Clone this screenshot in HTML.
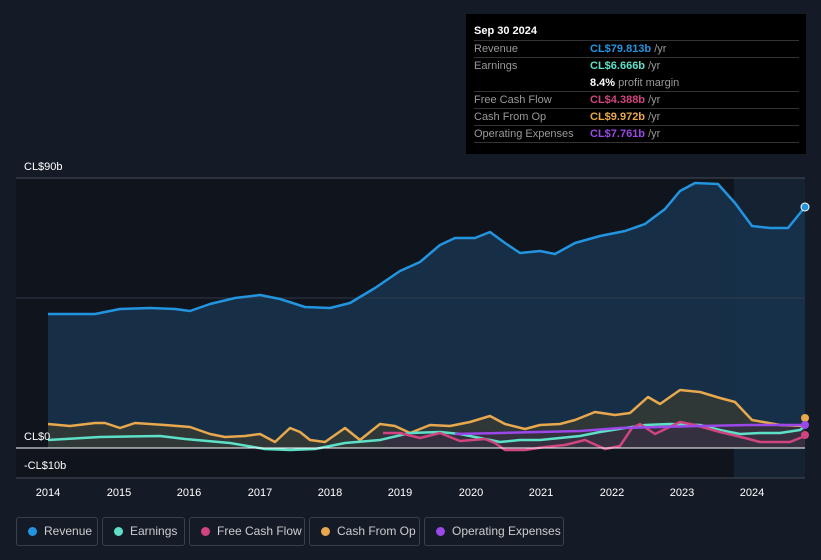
<!DOCTYPE html>
<html><head><meta charset="utf-8"><style>
*{margin:0;padding:0;box-sizing:border-box}
body{width:821px;height:560px;background:#151b26;font-family:"Liberation Sans",sans-serif;position:relative;overflow:hidden}
.tt{position:absolute;left:466px;top:14px;width:340px;height:140px;background:#000;padding:8px 7px 0 8px;font-size:11px}
.tt .h{color:#fff;font-weight:bold;font-size:11px;height:19px;line-height:18px;border-bottom:1px solid #333}
.tt .r{display:flex;height:17px;line-height:16px;border-bottom:1px solid #333;color:#999}
.tt .r.nb{border-bottom:none}
.tt .l{width:116px}
.tt b{font-weight:bold}
.lab{position:absolute;color:#fff;font-size:11px}
.leg{position:absolute;top:517px;height:29px;border:1px solid #3a404b;border-radius:3px;color:#ccc;font-size:12px;line-height:27px;padding-left:27px}
.leg i{position:absolute;left:11px;top:9px;width:9px;height:9px;border-radius:50%}
</style></head><body>
<svg width="821" height="560" style="position:absolute;left:0;top:0">
<rect x="16" y="178" width="718" height="300" fill="#10141c"/>
<rect x="734" y="178" width="71" height="300" fill="#152232"/>
<path d="M48,314 L95,314 120,309 150,308 175,309 190,311 210,304 235,298 260,295 280,299 305,307 330,308 350,303 375,288 400,271 420,262 440,245 455,238 475,238 490,232 505,243 520,253 540,251 555,254 575,243 600,236 625,231 645,224 665,209 680,191 695,183 718,184 735,203 752,226 770,228 788,228 805,207 L805,448 L48,448Z" fill="#17324b" opacity="0.9"/>
<line x1="16" y1="178" x2="805" y2="178" stroke="#444a55"/>
<line x1="16" y1="298" x2="805" y2="298" stroke="#2c3a4a"/>
<path d="M48,424 L70,426 95,423 105,423 120,428 135,423 165,425 190,427 210,434 225,437 245,436 260,434 275,442 290,428 300,432 310,440 325,442 345,428 360,440 380,424 395,426 410,433 430,425 450,426 470,422 490,416 505,424 525,429 540,425 560,424 575,420 595,412 615,415 630,413 648,397 660,404 680,390 700,392 720,398 735,402 752,420 780,425 805,426 L805,448 L48,448Z" fill="#3b3a30" opacity="0.7"/>
<path d="M383,433 L805,425 L805,448 L383,448Z" fill="#3a2a48" opacity="0.5"/>
<path d="M48,314 L95,314 120,309 150,308 175,309 190,311 210,304 235,298 260,295 280,299 305,307 330,308 350,303 375,288 400,271 420,262 440,245 455,238 475,238 490,232 505,243 520,253 540,251 555,254 575,243 600,236 625,231 645,224 665,209 680,191 695,183 718,184 735,203 752,226 770,228 788,228 805,207" fill="none" stroke="#2394df" stroke-width="2.5" stroke-linejoin="round"/>
<path d="M48,424 L70,426 95,423 105,423 120,428 135,423 165,425 190,427 210,434 225,437 245,436 260,434 275,442 290,428 300,432 310,440 325,442 345,428 360,440 380,424 395,426 410,433 430,425 450,426 470,422 490,416 505,424 525,429 540,425 560,424 575,420 595,412 615,415 630,413 648,397 660,404 680,390 700,392 720,398 735,402 752,420 780,425 805,426" fill="none" stroke="#e8a84e" stroke-width="2.5" stroke-linejoin="round"/>
<path d="M48,440 L100,437 160,436 185,439 230,443 265,449 290,450 315,449 345,443 380,440 410,433 440,432 460,434 480,438 500,442 520,440 540,440 560,438 580,436 600,432 625,428 645,425 670,424 700,425 720,430 740,434 760,433 780,433 800,430 805,426" fill="none" stroke="#5ee0c8" stroke-width="2.5" stroke-linejoin="round"/>
<path d="M383,433 L400,433 420,438 440,433 460,441 485,439 495,443 505,450 525,450 545,447 565,445 585,440 605,449 620,446 632,428 640,424 655,434 680,422 695,425 720,432 745,438 760,442 790,442 805,436" fill="none" stroke="#d0457f" stroke-width="2.5" stroke-linejoin="round"/>
<path d="M455,434 L500,433 580,431 620,428 700,426 750,425 805,425" fill="none" stroke="#9a48e8" stroke-width="2.5"/>
<line x1="16" y1="448" x2="805" y2="448" stroke="#fff" stroke-width="1"/>
<line x1="16" y1="478" x2="805" y2="478" stroke="#444a55"/>
<circle cx="805" cy="207" r="4" fill="#2394df" stroke="#fff" stroke-width="1"/>
<circle cx="805" cy="418" r="4" fill="#e8a84e"/>
<circle cx="805" cy="425" r="4" fill="#9a48e8"/>
<circle cx="805" cy="435" r="4" fill="#d0457f"/>
<g fill="#fff" font-size="11" font-family="Liberation Sans,sans-serif" text-anchor="middle">
<text x="48" y="496">2014</text><text x="119" y="496">2015</text><text x="189" y="496">2016</text><text x="260" y="496">2017</text><text x="330" y="496">2018</text><text x="400" y="496">2019</text><text x="471" y="496">2020</text><text x="541" y="496">2021</text><text x="612" y="496">2022</text><text x="682" y="496">2023</text><text x="752" y="496">2024</text>
</g>
</svg>
<div class="lab" style="left:24px;top:161px">CL$90b</div>
<div class="lab" style="left:24px;top:431px">CL$0</div>
<div class="lab" style="left:24px;top:460px">-CL$10b</div>
<div class="tt">
<div class="h">Sep 30 2024</div>
<div class="r"><span class="l">Revenue</span><span><b style="color:#2394df">CL$79.813b</b> /yr</span></div>
<div class="r nb"><span class="l">Earnings</span><span><b style="color:#5ee0c8">CL$6.666b</b> /yr</span></div>
<div class="r"><span class="l"></span><span><b style="color:#fff">8.4%</b> profit margin</span></div>
<div class="r"><span class="l">Free Cash Flow</span><span><b style="color:#d0457f">CL$4.388b</b> /yr</span></div>
<div class="r"><span class="l">Cash From Op</span><span><b style="color:#e8a84e">CL$9.972b</b> /yr</span></div>
<div class="r"><span class="l">Operating Expenses</span><span><b style="color:#9a48e8">CL$7.761b</b> /yr</span></div>
</div>
<div class="leg" style="left:16px;width:82px"><i style="background:#2394df"></i>Revenue</div>
<div class="leg" style="left:102px;width:83px"><i style="background:#5ee0c8"></i>Earnings</div>
<div class="leg" style="left:189px;width:116px"><i style="background:#d0457f"></i>Free Cash Flow</div>
<div class="leg" style="left:309px;width:111px"><i style="background:#e8a84e"></i>Cash From Op</div>
<div class="leg" style="left:424px;width:140px"><i style="background:#9a48e8"></i>Operating Expenses</div>
</body></html>
